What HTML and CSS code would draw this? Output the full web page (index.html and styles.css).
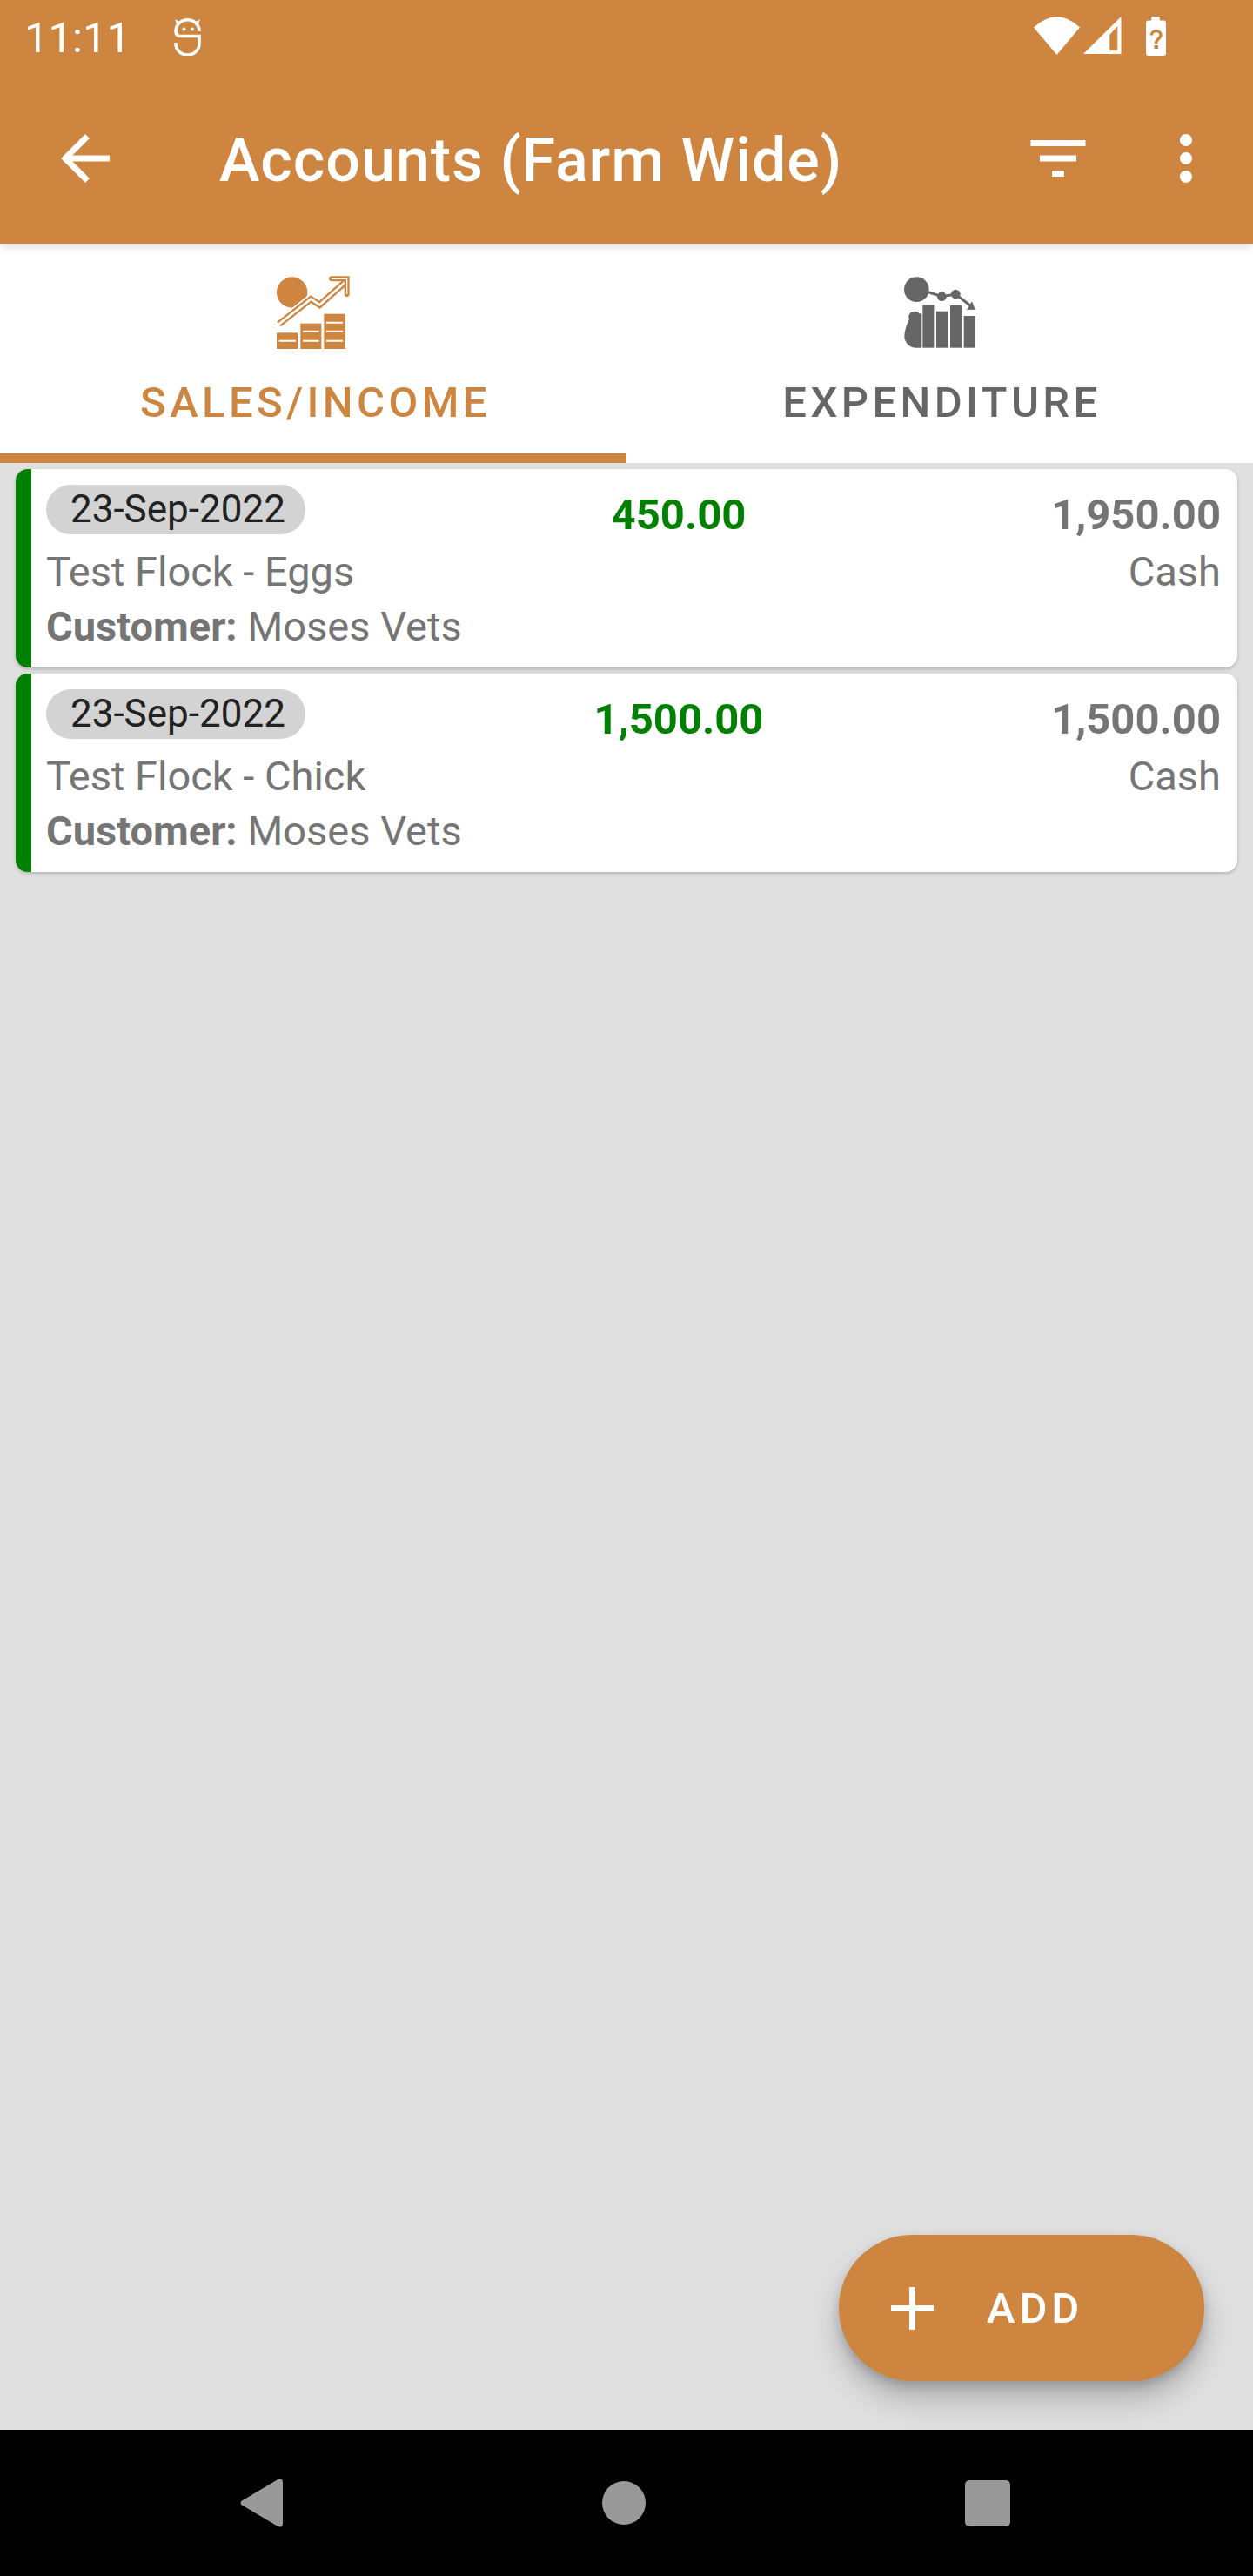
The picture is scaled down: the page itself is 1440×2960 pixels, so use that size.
FILE: index.html
```html
<!DOCTYPE html>
<html lang="en">
<head>
<meta charset="utf-8">
<title>Accounts (Farm Wide)</title>
<link rel="stylesheet" href="styles.css">
</head>
<body>
<div class="screen">
  <header class="appbar">
    <div class="status">
      <div class="status-left">
        <span class="clock">11:11</span>
        <svg class="s-app" viewBox="0 0 31 43" width="31" height="43"><g fill="none" stroke="#fff" stroke-width="3.6"><path d="M29 15A13.5 13 0 0 0 2 14.5C2 18 3.500 20.500 7 20.500H29V29.500A13.500 12.500 0 0 1 2 29.500V28"/></g><circle cx="11.500" cy="12.500" r="2" fill="#fff"/><circle cx="21" cy="12.500" r="2" fill="#fff"/><path d="M1 1l5 3-3 3zM30 1l-5 3 3 3z" fill="#fff"/></svg>
      </div>
      <div class="status-right">
        <svg viewBox="0 0 53 44" width="53" height="44"><path d="M0 12.500Q26.500-12 53 12.500L26.500 44Z" fill="#fff"/></svg>
        <svg viewBox="0 0 44 43" width="44" height="43"><path fill-rule="evenodd" d="M43.500 0V43H0ZM39.300 11 30.300 21V39.300H39.300Z" fill="#fff"/></svg>
        <svg class="s-batt" viewBox="0 0 23 45" width="23" height="45"><path d="M6.300 0H15.700V4.500H20A3 3 0 0 1 23 7.500V42A3 3 0 0 1 20 45H3A3 3 0 0 1 0 42V7.500A3 3 0 0 1 3 4.500H6.300Z" fill="#fff"/><path d="M6.500 21.500C6.500 15 17 15 17 21.500C17 25.500 11.500 25.500 11.500 31" fill="none" stroke="#cd853f" stroke-width="3.400"/><rect x="9.500" y="33" width="4.500" height="4" fill="#cd853f"/></svg>
      </div>
    </div>
    <div class="toolbar">
      <svg class="tool-back" viewBox="0 0 24 24" width="84" height="84"><path d="M20 11H7.830l5.590-5.590L12 4l-8 8 8 8 1.410-1.410L7.830 13H20v-2z" fill="#fff"/></svg>
      <h1 class="title">Accounts (Farm Wide)</h1>
      <svg class="tool-filter" viewBox="0 0 24 24" width="84" height="84"><path d="M10 18h4v-2h-4v2zM3 6v2h18V6H3zm3 7h12v-2H6v2z" fill="#fff"/></svg>
      <svg class="tool-more" viewBox="0 0 24 24" width="84" height="84"><path d="M12 8c1.100 0 2-.9 2-2s-.9-2-2-2-2 .9-2 2 .9 2 2 2zm0 2c-1.100 0-2 .9-2 2s.9 2 2 2 2-.9 2-2-.9-2-2-2zm0 6c-1.100 0-2 .9-2 2s.9 2 2 2 2-.9 2-2-.9-2-2-2z" fill="#fff"/></svg>
    </div>
  </header>

  <nav class="tabs">
    <div class="tab tab-active">
      <svg viewBox="114 50 252 252" width="84" height="84">
        <circle cx="167" cy="107" r="53" fill="#cd853f"/>
        <path d="M122 216 232 130 262 150 350 72" fill="none" stroke="#fff" stroke-width="32"/>
        <path d="M122 216 232 130 262 150 350 72" fill="none" stroke="#cd853f" stroke-width="22"/>
        <path d="M122 216 232 130 262 150 350 72" fill="none" stroke="#fff" stroke-width="8"/>
        <path d="M303 60H356V113" fill="none" stroke="#cd853f" stroke-width="18" stroke-linecap="round"/>
        <path d="M303 60H356V113" fill="none" stroke="#fff" stroke-width="4"/>
        <rect x="114" y="246" width="72" height="56" fill="#cd853f"/>
        <rect x="196" y="214" width="72" height="88" fill="#cd853f"/>
        <rect x="277" y="181" width="73" height="121" fill="#cd853f"/>
        <path d="M122 274H180M204 241H260M204 274H260M285 241H342M285 274H342M285 211H342" stroke="#fff" stroke-width="6"/>
      </svg>
      <span class="tab-label">SALES/INCOME</span>
    </div>
    <div class="tab">
      <svg viewBox="114 50 252 252" width="84" height="84" fill="#666">
        <circle cx="160" cy="97" r="43"/>
        <circle cx="247" cy="121" r="16"/>
        <circle cx="295" cy="113" r="16"/>
        <path d="M190 103 247 121 295 113 352 158" fill="none" stroke="#666" stroke-width="9"/>
        <path d="M333 167 362 166 351 138Z"/>
        <rect x="181" y="150" width="39" height="148"/>
        <rect x="228" y="172" width="39" height="126"/>
        <rect x="276" y="152" width="39" height="146"/>
        <rect x="323" y="188" width="39" height="110"/>
        <circle cx="153" cy="192" r="20"/>
        <path d="M135 198Q118 235 118 258A40 40 0 0 0 158 298H178V180H165Z"/>
      </svg>
      <span class="tab-label">EXPENDITURE</span>
    </div>
  </nav>

  <main class="list">
    <article class="card">
      <span class="date">23-Sep-2022</span>
      <span class="amount">450.00</span>
      <span class="total">1,950.00</span>
      <span class="name">Test Flock - Eggs</span>
      <span class="method">Cash</span>
      <span class="party"><b>Customer:</b> Moses Vets</span>
    </article>
    <article class="card">
      <span class="date">23-Sep-2022</span>
      <span class="amount">1,500.00</span>
      <span class="total">1,500.00</span>
      <span class="name">Test Flock - Chick</span>
      <span class="method">Cash</span>
      <span class="party"><b>Customer:</b> Moses Vets</span>
    </article>
    <button class="fab">
      <svg viewBox="0 0 49 49" width="49" height="49"><path d="M21 0h7v21h21v7H28v21h-7V28H0v-7h21z" fill="#fff"/></svg>
      <span>ADD</span>
    </button>
  </main>

  <footer class="navbar">
    <svg viewBox="0 0 49 56" width="49" height="56"><path d="M43 1.200 2 25.500Q-1 28 2 30.500L43 54.800Q49 57.500 49 51V5Q49-1.500 43 1.200Z" fill="#999"/></svg>
    <span class="nav-home"></span>
    <span class="nav-recent"></span>
  </footer>
</div>
</body>
</html>
```
FILE: styles.css
```css
* { box-sizing: border-box; }
html, body { margin: 0; padding: 0; }
body { font-family: Roboto, "Liberation Sans", sans-serif; background: #e0e0e0; }

.screen { width: 1440px; height: 2960px; display: flex; flex-direction: column; overflow: hidden; }

.appbar { height: 280px; background: #cd853f; color: #fff; flex: none; position: relative; z-index: 2; box-shadow: 0 3px 10px rgba(0,0,0,.14); }

.status { height: 84px; display: flex; justify-content: space-between; align-items: flex-start; padding: 19px 100px 0 28px; }
.status-left { display: flex; align-items: flex-start; }
.clock { font-size: 49px; line-height: 50px; font-weight: 400; width: 172px; }
.s-app { margin-top: 2px; }
.status-right { display: flex; align-items: flex-start; gap: 4px; }
.s-batt { margin-left: 24px; }

.toolbar { height: 196px; display: flex; align-items: flex-start; padding: 56px 35px 0 56px; }
.title { margin: 2px 0 0 112px; font-size: 70px; line-height: 84px; font-weight: 500; letter-spacing: 0.95px; flex: 1; white-space: nowrap; }
.tool-filter { margin-right: 63px; }

.tabs { height: 252px; flex: none; display: flex; background: #fff; }
.tab { width: 720px; display: flex; flex-direction: column; align-items: center; padding-top: 37px; color: #666; border-bottom: 11px solid transparent; }
.tab-active { color: #cd853f; border-bottom-color: #cd853f; }
.tab-label { font-size: 49px; line-height: 56px; font-weight: 500; letter-spacing: 4.4px; margin: 34px 0 0 5px; white-space: nowrap; }

.list { flex: 1; position: relative; padding: 7px 18px 0; display: flex; flex-direction: column; gap: 7px; background: #e0e0e0; }

.card { height: 228px; background: #fff; border-left: 18px solid #008000; border-radius: 14px; box-shadow: 0 2px 4px rgba(0,0,0,.2); padding: 18px 19px 0 17px; display: grid; grid-template-columns: 560px 334px 1fr; grid-template-rows: 70px 60px 60px; align-items: start; font-size: 47px; color: #757575; }

.date { grid-column: 1; justify-self: start; height: 57px; line-height: 57px; padding: 0 23px 0 28px; border-radius: 29px; background: #d3d3d3; color: #212121; font-size: 44px; white-space: nowrap; }
.amount { grid-column: 2; text-align: center; color: #008000; font-size: 49px; line-height: 70px; font-weight: 700; }
.total { grid-column: 3; text-align: right; font-size: 49px; line-height: 70px; font-weight: 700; }
.name { grid-column: 1 / 3; line-height: 60px; }
.method { grid-column: 3; text-align: right; line-height: 60px; }
.party { grid-column: 1 / -1; line-height: 60px; margin-top: 3px; }
.party b { font-weight: 700; }

.fab { position: absolute; right: 56px; bottom: 56px; width: 420px; height: 168px; border: 0; border-radius: 84px; background: #cd853f; color: #fff; display: flex; align-items: center; padding: 0 0 0 60px; gap: 61px; font-family: inherit; font-size: 49px; font-weight: 500; letter-spacing: 4.9px; box-shadow: 0 21px 35px rgba(0,0,0,.22), 0 6px 12px rgba(0,0,0,.16); }

.navbar { height: 168px; flex: none; background: #000; position: relative; z-index: 1; display: flex; align-items: center; padding: 0 279px 0 276px; justify-content: space-between; }
.nav-home { width: 50px; height: 50px; border-radius: 50%; background: #999; }
.nav-recent { width: 52px; height: 53px; border-radius: 5px; background: #999; }
```
